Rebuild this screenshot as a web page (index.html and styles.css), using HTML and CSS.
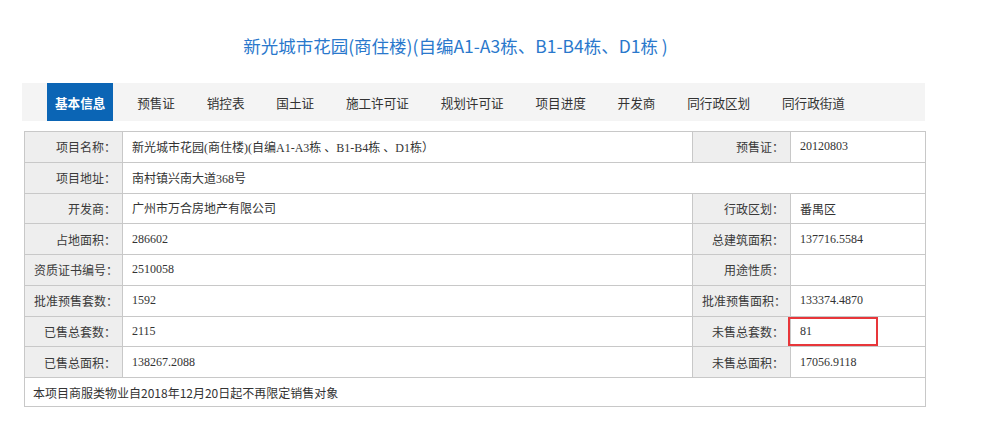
FILE: index.html
```html
<!DOCTYPE html>
<html lang="zh-CN">
<head>
<meta charset="utf-8">
<title>新光城市花园</title>
<link rel="stylesheet" href="styles.css">
</head>
<body>
<div class="page">
  <h1 class="title">新光城市花园(商住楼)(自编A1-A3栋、B1-B4栋、D1栋 )</h1>
  <nav class="tabs">
    <a class="tab active">基本信息</a>
    <a class="tab">预售证</a>
    <a class="tab">销控表</a>
    <a class="tab">国土证</a>
    <a class="tab">施工许可证</a>
    <a class="tab">规划许可证</a>
    <a class="tab">项目进度</a>
    <a class="tab">开发商</a>
    <a class="tab">同行政区划</a>
    <a class="tab">同行政街道</a>
  </nav>
  <table class="info">
    <colgroup>
      <col class="c-label"><col class="c-wide"><col class="c-label"><col class="c-val">
    </colgroup>
    <tr><th>项目名称：</th><td>新光城市花园(商住楼)(自编A1-A3栋 、B1-B4栋 、D1栋）</td><th>预售证：</th><td>20120803</td></tr>
    <tr><th>项目地址：</th><td colspan="3">南村镇兴南大道368号</td></tr>
    <tr><th>开发商：</th><td>广州市万合房地产有限公司</td><th>行政区划：</th><td class="cjk">番禺区</td></tr>
    <tr><th>占地面积：</th><td>286602</td><th>总建筑面积：</th><td>137716.5584</td></tr>
    <tr><th>资质证书编号：</th><td>2510058</td><th>用途性质：</th><td></td></tr>
    <tr><th>批准预售套数：</th><td>1592</td><th>批准预售面积：</th><td>133374.4870</td></tr>
    <tr><th>已售总套数：</th><td>2115</td><th>未售总套数：</th><td class="marked"><span class="mark"></span>81</td></tr>
    <tr><th>已售总面积：</th><td>138267.2088</td><th>未售总面积：</th><td>17056.9118</td></tr>
    <tr class="note"><td colspan="4">本项目商服类物业自2018年12月20日起不再限定销售对象</td></tr>
  </table>
</div>
</body>
</html>
```

FILE: styles.css
```css
html, body {
  margin: 0;
  padding: 0;
  background: #ffffff;
}

.page {
  width: 903px;
  padding: 32px 0 0 22px;
  font-family: "Liberation Serif", "Noto Sans CJK SC", serif;
  color: #333333;
}

.title {
  margin: 0;
  padding-right: 36px;
  height: 28px;
  line-height: 28px;
  text-align: center;
  font-family: "Noto Sans CJK SC", sans-serif;
  font-size: 17.5px;
  font-weight: 400;
  color: #2a78cc;
}

.tabs {
  margin-top: 23px;
  height: 38px;
  background: #f4f4f4;
  display: flex;
  align-items: stretch;
  gap: 15.8px;
  padding-left: 25px;
}

.tab {
  display: flex;
  align-items: center;
  padding: 0 8px;
  font-family: "Noto Sans CJK SC", sans-serif;
  font-size: 12.6px;
  color: #333333;
}

.tab.active {
  background: #0b65b5;
  color: #ffffff;
  font-weight: 700;
}

.info {
  margin: 10px 0 0 2px;
  width: 901px;
  table-layout: fixed;
  border-collapse: collapse;
  border: 1px solid #c4c4c4;
  font-size: 12px;
}

.c-label { width: 98px; }
.c-wide { width: 570px; }
.c-val { width: 135px; }

.info th,
.info td {
  height: 29.75px;
  padding: 0 9px;
  border: 1px solid #c8c8c8;
  vertical-align: middle;
  white-space: nowrap;
  overflow: visible;
}

.info th {
  background: #eeeeee;
  font-family: "Noto Sans CJK SC", sans-serif;
  font-weight: 400;
  text-align: right;
  padding-right: 6px;
  color: #3a3a3a;
}

.info td {
  text-align: left;
  background: #ffffff;
}

.info td.cjk {
  font-family: "Noto Sans CJK SC", sans-serif;
}

.info tr.note td {
  height: 28px;
  padding-left: 8px;
  font-family: "Noto Sans CJK SC", sans-serif;
}

.marked {
  position: relative;
}

.mark {
  position: absolute;
  left: -3px;
  top: 0;
  width: 86px;
  height: 25px;
  border: 2px solid #e8363a;
}
```
